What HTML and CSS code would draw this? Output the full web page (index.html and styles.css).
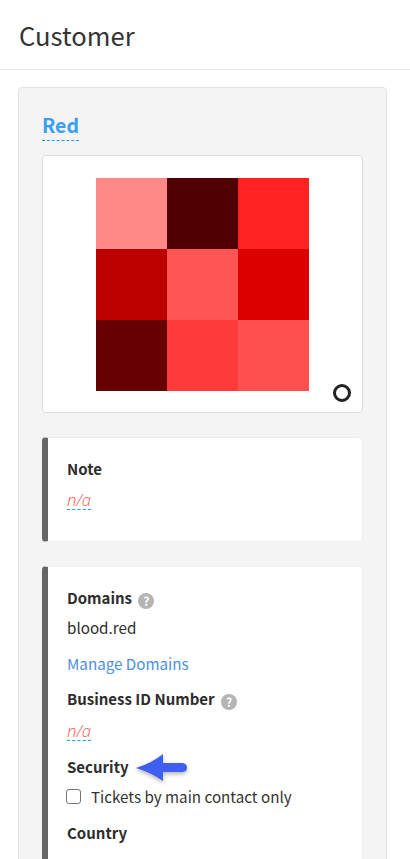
FILE: index.html
```html
<!DOCTYPE html>
<html lang="en">
<head>
<meta charset="utf-8">
<title>Customer</title>
<link rel="stylesheet" href="styles.css">
</head>
<body>
<header class="page-header"><h1 class="page-title">Customer</h1></header>
<main class="content">
  <section class="card">
    <h2 class="name"><span class="editable">Red</span></h2>
    <div class="avatar-box">
      <div class="avatar">
        <i class="c1"></i><i class="c2"></i><i class="c3"></i>
        <i class="c4"></i><i class="c5"></i><i class="c6"></i>
        <i class="c7"></i><i class="c8"></i><i class="c9"></i>
      </div>
      <span class="ring"></span>
    </div>
    <div class="panel note-panel">
      <div class="label">Note</div>
      <div class="value note-value"><span class="na">n/a</span></div>
    </div>
    <div class="panel info-panel">
      <div class="label">Domains <span class="help">?</span></div>
      <div class="value domain">blood.red</div>
      <div class="value manage"><a class="link">Manage Domains</a></div>
      <div class="label biz">Business ID Number <span class="help">?</span></div>
      <div class="value"><span class="na">n/a</span></div>
      <div class="label security">Security
        <svg class="arrow" width="65" height="40" viewBox="0 0 65 40" aria-hidden="true">
          <path d="M6 19 Q22 14 33 5 L33 14 L52.500 14 Q57 14.500 57 18.500 Q57 22.500 52.500 23 L33 23 L33 32 Q22 24 6 19 Z" fill="#3e5ff2"/>
        </svg>
      </div>
      <label class="check"><span class="box"></span>Tickets by main contact only</label>
      <div class="label country">Country</div>
      <div class="value"><span class="na">n/a</span></div>
    </div>
  </section>
</main>
</body>
</html>
```
FILE: styles.css
```css
* { box-sizing: border-box; }
html, body { height: 100%; overflow: hidden; }
body {
  margin: 0;
  background: #fff;
  color: #2d2d2d;
  font-family: "Noto Sans CJK SC", "Noto Sans", sans-serif;
  font-size: 15.2px;
}
.page-header {
  height: 70px;
  padding: 18px 19px 0;
  border-bottom: 1px solid #e7e7e7;
}
.page-title {
  margin: 0;
  font-size: 25.6px;
  line-height: 34px;
  font-weight: 400;
  color: #333;
}
.content { padding: 17px 23px 0 18px; }
.card {
  background: #f4f4f4;
  border: 1px solid #e3e3e3;
  border-radius: 4px;
  padding: 23px 23px 0;
}
.name {
  margin: 0 0 14px;
  font-size: 19.500px;
  line-height: 27px;
  font-weight: 700;
  color: #3a9fee;
}
.editable {
  display: inline-block;
  padding-bottom: 2px;
  border-bottom: 1px dashed #1e9bf0;
}
.avatar-box {
  position: relative;
  height: 258px;
  padding: 22px 0 0 53px;
  background: #fff;
  border: 1px solid #ddd;
  border-radius: 4px;
}
.avatar {
  display: grid;
  grid-template-columns: repeat(3, 71px);
  grid-template-rows: repeat(3, 71px);
  width: 213px;
}
.c1 { background: #ff8888; }
.c2 { background: #500000; }
.c3 { background: #ff2222; }
.c4 { background: #bb0000; }
.c5 { background: #ff5555; }
.c6 { background: #dd0000; }
.c7 { background: #660000; }
.c8 { background: #ff3a3a; }
.c9 { background: #ff5050; }
.ring {
  position: absolute;
  right: 11px;
  bottom: 10px;
  width: 18px;
  height: 18px;
  border: 3px solid #222;
  border-radius: 50%;
}
.panel {
  background: #fff;
  border: 1px solid #eee;
  border-left: 6px solid #666;
  border-radius: 4px;
  padding-left: 19px;
}
.note-panel {
  height: 105px;
  margin-top: 24px;
  padding-top: 20px;
}
.info-panel {
  margin-top: 24px;
  padding-top: 20px;
  height: 400px;
}
.label {
  font-size: 15px;
  line-height: 22px;
  font-weight: 700;
  color: #2d2d2d;
  position: relative;
}
.value { font-size: 15.2px; line-height: 22px; margin-top: 9px; }
.note-value { margin-top: 8px; }
.na {
  display: inline-block;
  font-family: "Open Sans", sans-serif;
  font-size: 16.700px;
  font-style: italic;
  font-weight: 300;
  color: #ee5a5a;
  border-bottom: 1px dashed #1e9bf0;
  line-height: 19px;
}
.help {
  display: inline-block;
  width: 16px;
  height: 16px;
  margin-left: 3px;
  border-radius: 50%;
  background: #b5b5b5;
  color: #fff;
  font-size: 12px;
  line-height: 16px;
  text-align: center;
  vertical-align: -2px;
}
.domain { margin-top: 7px; }
.manage { margin-top: 14px; }
.link { color: #4a90e2; }
.biz { margin-top: 14px; }
.security { margin-top: 15px; }
.arrow {
  position: absolute;
  left: 63px;
  top: -7px;
  filter: drop-shadow(0 2px 2px rgba(0,0,0,.3));
}
.check {
  display: flex;
  align-items: center;
  margin: 7px 0 0 -1px;
  font-size: 15.2px;
  line-height: 22px;
  color: #333;
}
.box {
  width: 15px;
  height: 15px;
  margin-right: 10px;
  border: 1px solid #767676;
  border-radius: 3px;
  background: #fff;
}
.country { margin-top: 15px; }
```
